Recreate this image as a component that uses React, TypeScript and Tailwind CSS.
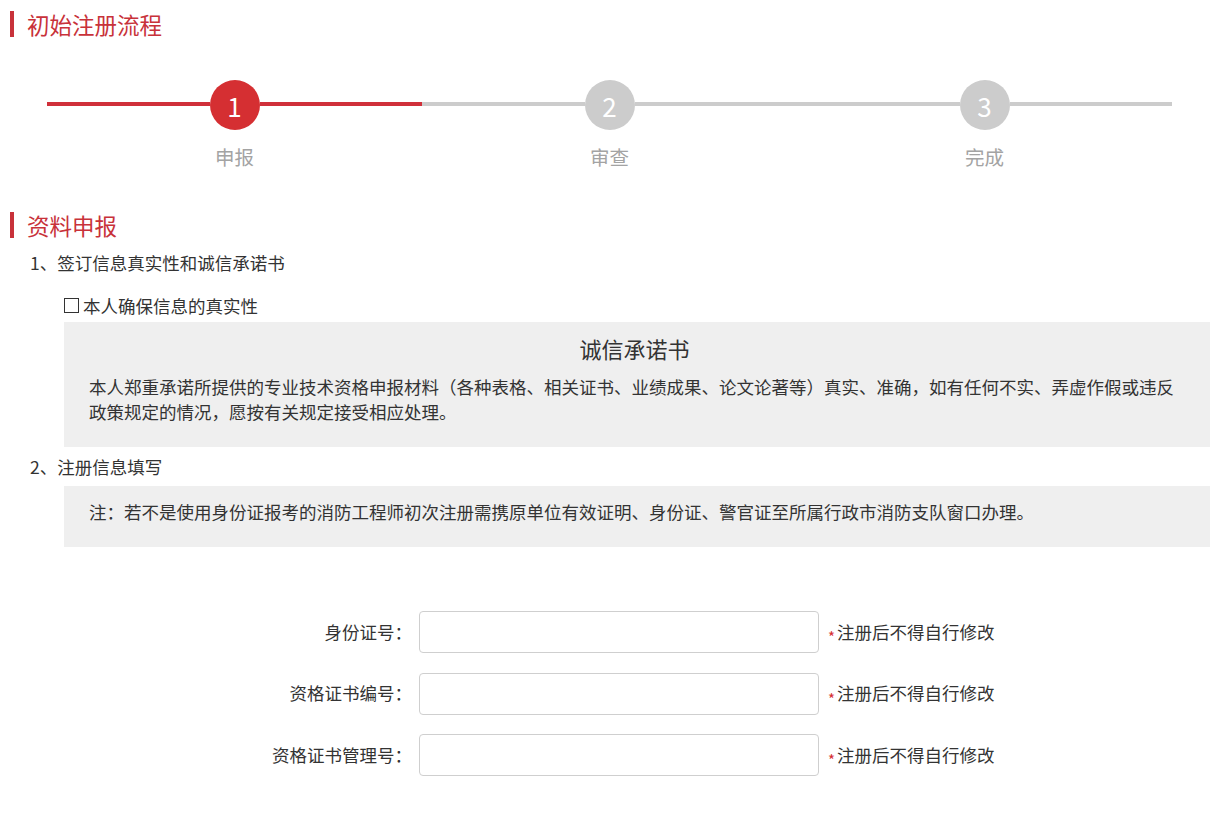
import React from "react";

const font = { fontFamily: '"Noto Sans CJK SC", "Noto Sans", sans-serif' };

function SectionTitle({ children }: { children: React.ReactNode }) {
  return (
    <div className="flex items-center h-[26px] pl-[10px]">
      <div className="w-[4px] h-[26px] bg-[#c8323a]" />
      <div className="ml-[13px] text-[22.5px] leading-[26px] text-[#c8323a]">{children}</div>
    </div>
  );
}

function Step({ n, label, left, right, active }: { n: number; label: string; left: string; right: string; active: boolean }) {
  return (
    <div className="flex-1 flex flex-col">
      <div className="flex items-center h-[50px]">
        <div className={`flex-1 h-[4px] mt-[-2px] ${left}`} />
        <div
          className={`w-[50px] h-[50px] rounded-full flex items-center justify-center text-white text-[26px] ${
            active ? "bg-[#d52f32]" : "bg-[#cccccc]"
          }`}
        >
          {n}
        </div>
        <div className={`flex-1 h-[4px] mt-[-2px] ${right}`} />
      </div>
      <div className="mt-[15px] text-center text-[19.5px] leading-[24px] text-[#a3a3a3]">{label}</div>
    </div>
  );
}

function FormRow({ label }: { label: string }) {
  return (
    <div className="flex items-center h-[42px]">
      <div className="w-[412px] text-right text-[17.5px] text-[#333]">{label}</div>
      <input className="ml-[7px] w-[400px] h-[42px] border border-[#cfcfcf] rounded-[4px] bg-white outline-none" />
      <div className="ml-[9px] flex items-center text-[17.5px] text-[#333]">
        <span className="text-[15px] leading-none text-[#d52f32] mr-[2px] mt-[9px]">*</span>
        注册后不得自行修改
      </div>
    </div>
  );
}

export default function App() {
  return (
    <div className="w-[1218px] h-[827px] bg-white overflow-hidden" style={font}>
      <div className="pt-[11px]">
        <SectionTitle>初始注册流程</SectionTitle>
      </div>

      <div className="mt-[43px] ml-[47px] w-[1125px] flex">
        <Step n={1} label="申报" left="bg-[#d0303a]" right="bg-[#d0303a]" active />
        <Step n={2} label="审查" left="bg-[#cccccc]" right="bg-[#cccccc]" active={false} />
        <Step n={3} label="完成" left="bg-[#cccccc]" right="bg-[#cccccc]" active={false} />
      </div>

      <div className="mt-[43px]">
        <SectionTitle>资料申报</SectionTitle>
      </div>

      <div className="mt-[12px] pl-[30px] text-[17.5px] leading-[25px] text-[#333]">1、签订信息真实性和诚信承诺书</div>

      <div className="mt-[18px] pl-[64px] flex items-center text-[17.5px] leading-[25px] text-[#333]">
        <span className="inline-block w-[15px] h-[15px] border border-[#333] mr-[4px]" />
        本人确保信息的真实性
      </div>

      <div className="mt-[4px] ml-[64px] w-[1146px] bg-[#efefef] pt-[11px] pb-[23px] pl-[25px] pr-[30px] text-[#333]">
        <div className="text-center text-[22px] leading-[30px]">诚信承诺书</div>
        <div className="mt-[11px] text-[17.5px] leading-[25px]">
          本人郑重承诺所提供的专业技术资格申报材料（各种表格、相关证书、业绩成果、论文论著等）真实、准确，如有任何不实、弄虚作假或违反政策规定的情况，愿按有关规定接受相应处理。
        </div>
      </div>

      <div className="mt-[7px] pl-[30px] text-[17.5px] leading-[25px] text-[#333]">2、注册信息填写</div>

      <div className="mt-[7px] ml-[64px] w-[1146px] h-[61px] bg-[#efefef] pt-[13px] pl-[25px] text-[17.5px] leading-[25px] text-[#333]">
        注：若不是使用身份证报考的消防工程师初次注册需携原单位有效证明、身份证、警官证至所属行政市消防支队窗口办理。
      </div>

      <div className="mt-[64px] flex flex-col gap-[19.5px]">
        <FormRow label="身份证号：" />
        <FormRow label="资格证书编号：" />
        <FormRow label="资格证书管理号：" />
      </div>
    </div>
  );
}
